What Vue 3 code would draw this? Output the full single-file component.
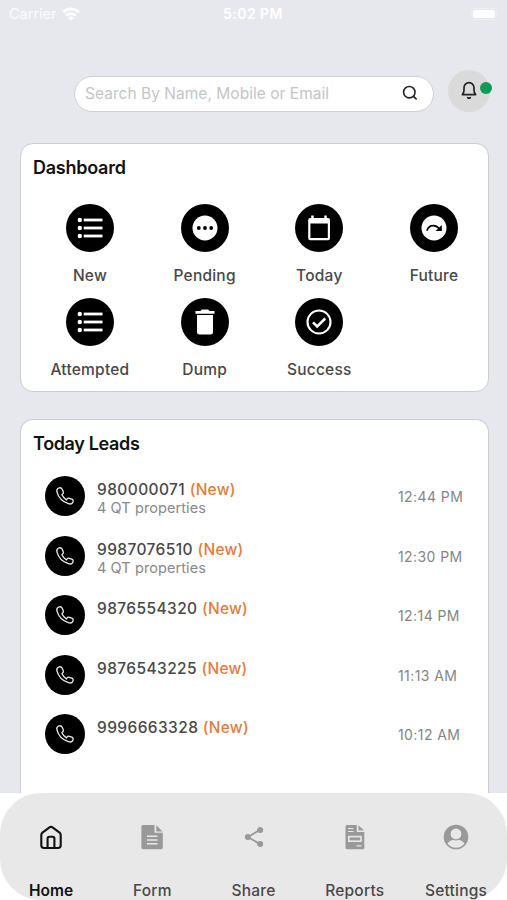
<script setup>
const shortcuts = [
  { label: 'New', icon: 'list' },
  { label: 'Pending', icon: 'pending' },
  { label: 'Today', icon: 'calendar' },
  { label: 'Future', icon: 'future' },
  { label: 'Attempted', icon: 'list' },
  { label: 'Dump', icon: 'trash' },
  { label: 'Success', icon: 'success' },
]

const leads = [
  { phone: '980000071', note: '4 QT properties', time: '12:44 PM' },
  { phone: '9987076510', note: '4 QT properties', time: '12:30 PM' },
  { phone: '9876554320', note: '', time: '12:14 PM' },
  { phone: '9876543225', note: '', time: '11:13 AM' },
  { phone: '9996663328', note: '', time: '10:12 AM' },
]

const tabs = ['Home', 'Form', 'Share', 'Reports', 'Settings']
</script>

<template>
  <div class="screen">
    <div class="status">
      <div class="carrier">
        <span>Carrier</span>
        <svg width="18" height="14" viewBox="0 0 18 14" fill="none" stroke="#fff" stroke-width="2.8">
          <path d="M1 5.200C5.600.7 12.400.7 17 5.200" />
          <path d="M4 8.600C6.800 5.900 11.200 5.900 14 8.600" />
          <path d="M9 13.800 5.900 10.700C7.700 9.200 10.300 9.200 12.100 10.700Z" fill="#fff" stroke="none" />
        </svg>
      </div>
      <span class="clock">5:02 PM</span>
      <div class="battery"><i></i></div>
    </div>

    <header class="header">
      <div class="search">
        <span>Search By Name, Mobile or Email</span>
        <svg width="16" height="16" viewBox="0 0 16 16" fill="none" stroke="#222" stroke-width="1.600" stroke-linecap="round">
          <circle cx="7.300" cy="7.200" r="5.700" />
          <path d="m11.500 11.400 2.600 2.500" />
        </svg>
      </div>
      <div class="bell">
        <svg width="18" height="20" viewBox="0 0 18 20" fill="none" stroke="#222" stroke-width="1.700" stroke-linecap="round" stroke-linejoin="round">
          <path d="M2.400 13.600h13.200c-1.200-1.300-1.600-2.700-1.600-4.300V6.700a5 5 0 0 0-10 0v2.600c0 1.600-.4 3-1.600 4.300Z" />
          <path d="M7.700 16.700q1.300.8 2.600 0" />
        </svg>
        <i class="dot"></i>
      </div>
    </header>

    <section class="card dashboard">
      <h2>Dashboard</h2>
      <div class="grid">
        <div v-for="s in shortcuts" :key="s.label" class="shortcut">
          <div class="disc">
            <svg width="28" height="28" viewBox="0 0 28 28">
              <g v-if="s.icon === 'list'" fill="#fff">
                <template v-for="y in [6, 14, 22]" :key="y">
                  <circle cx="3.800" :cy="y" r="2.200" />
                  <rect x="7.700" :y="y - 1.400" width="18.800" height="2.800" />
                </template>
              </g>
              <g v-else-if="s.icon === 'pending'">
                <circle cx="14" cy="14" r="12.500" fill="#fff" />
                <circle v-for="x in [7.800, 14, 20.200]" :key="x" :cx="x" cy="14" r="1.900" />
              </g>
              <g v-else-if="s.icon === 'calendar'">
                <path fill="#fff" fill-rule="evenodd" d="M6.200 1.600h2.500V4h10.600V1.600h2.500V4h1.200q2 0 2 2v18.200q0 2-2 2H5.200q-2 0-2-2V6q0-2 2-2h1Zm-.8 8v14.400h17.400V9.600Z" />
              </g>
              <g v-else-if="s.icon === 'future'">
                <circle cx="14" cy="14" r="12.500" fill="#fff" />
                <path d="M6.900 16.800C8 13 10.200 11.600 13.200 11.600c2.600 0 4.400 1.100 6.200 3.200" fill="none" stroke="#000" stroke-width="1.700" />
                <path d="M21.800 10.900v6.200h-6.200Z" />
              </g>
              <g v-else-if="s.icon === 'trash'" fill="#fff">
                <path d="M4.500 3h5l1.300-1.500h6.400L18.500 3h5v2.800h-19Z" />
                <path d="M6 7h16v16.900q0 2.500-2.500 2.500h-11Q6 26.400 6 23.900Z" />
              </g>
              <g v-else fill="none" stroke="#fff">
                <circle cx="14" cy="14" r="11.500" stroke-width="2.100" />
                <path d="m8 14.300 4.200 4.200 8-8" stroke-width="2.500" />
              </g>
            </svg>
          </div>
          <span>{{ s.label }}</span>
        </div>
      </div>
    </section>

    <section class="card leads">
      <h2>Today Leads</h2>
      <div v-for="l in leads" :key="l.phone" class="lead">
        <div class="call">
          <svg width="20" height="20" viewBox="0 0 20 20" fill="none" stroke="#eee" stroke-width="1.300" stroke-linejoin="round">
            <path d="M3.700 2C2 2.700 1.500 4.200 2 6.100c1.500 5.400 5.800 9.800 11.400 11.600 1.900.6 3.800.1 4.500-1.500.6-1.400.1-2.500-1.200-3l-2.300-.9c-1.200-.4-2.100-.1-2.600 1l-.3.700C9.800 12.700 8 11 6.900 8.700l.7-.6c.9-.7 1-1.600.6-2.600l-1-2.200C6.600 2 5.200 1.400 3.700 2Z" />
          </svg>
        </div>
        <div class="info">
          <div class="phone">{{ l.phone }} <em>(New)</em></div>
          <div v-if="l.note" class="note">{{ l.note }}</div>
        </div>
        <span class="time">{{ l.time }}</span>
      </div>
    </section>

    <div class="dock">
      <nav class="tabs">
        <div v-for="t in tabs" :key="t" class="tab" :class="{ active: t === 'Home' }">
          <svg width="28" height="28" viewBox="0 0 28 28">
            <g v-if="t === 'Home'" fill="none" stroke="#111" stroke-width="2.100" stroke-linejoin="round">
              <path d="M4.300 12Q4.300 10.500 5.400 9.600L12.500 4.300q1.500-1 3 0l7.100 5.300q1.100.9 1.100 2.400v10.300q0 2.700-2.700 2.700H7q-2.700 0-2.700-2.700Z" />
              <path d="M10.600 24.500v-9q0-1.700 1.700-1.700h3.400q1.700 0 1.700 1.700v9" />
            </g>
            <g v-else-if="t === 'Form'" fill="#999">
              <path d="M5.100 2h11.400v7.700h8.300v14.900q0 1.700-1.700 1.700h-18q-1.700 0-1.700-1.700V3.700Q3.400 2 5.100 2Z" />
              <path d="M18.300 2.300 24.600 8.500h-6.300Z" />
              <path d="M9 13.200h10.500M9 17h10.500M9 20.800h10.500" stroke="#e8e8e8" stroke-width="1.500" />
            </g>
            <g v-else-if="t === 'Share'" fill="#999" stroke="#999">
              <path d="M20.200 6.800 7.800 14l12.400 7.200" fill="none" stroke-width="1.900" />
              <circle cx="20.200" cy="7" r="2.600" />
              <circle cx="7.800" cy="14" r="2.600" />
              <circle cx="20.200" cy="21" r="2.600" />
            </g>
            <g v-else-if="t === 'Reports'" fill="#999">
              <path d="M6 2h9.800v7h7.500v15.800q0 1.500-1.500 1.500H6q-1.500 0-1.500-1.500V3.500Q4.500 2 6 2Z" />
              <path d="M17.500 2.200 23 7.500h-5.500Z" />
              <path d="M7 5.500h5.500M7 8.500h5.500M15.500 22.800h5" stroke="#e8e8e8" stroke-width="1.200" />
              <rect x="7.800" y="13.600" width="12.200" height="4.600" fill="none" stroke="#e8e8e8" stroke-width="1.600" />
            </g>
            <g v-else>
              <circle cx="14" cy="14" r="12.300" fill="#999" />
              <path d="M5.400 20.600c1.800-2.900 5-4 8.600-4s6.800 1.100 8.600 4a11 11 0 0 1-17.200 0Z" fill="#e8e8e8" />
              <circle cx="14" cy="10.900" r="6" fill="#e8e8e8" stroke="#999" stroke-width="1.200" />
            </g>
          </svg>
          <span>{{ t }}</span>
        </div>
      </nav>
    </div>
  </div>
</template>

<style>
body { margin: 0; overflow: hidden; }
</style>

<style scoped>
.screen {
  box-sizing: border-box;
  width: 507px;
  height: 900px;
  overflow: hidden;
  display: flex;
  flex-direction: column;
  background: #e7e8ee;
  font-family: Inter, "Liberation Sans", sans-serif;
  color: #484848;
}
svg { display: block; flex: none; }
.status {
  flex: none;
  height: 27px;
  padding: 0 10px 0 9px;
  display: grid;
  grid-template-columns: 1fr auto 1fr;
  align-items: center;
  color: #fff;
  font-size: 14.500px;
}
.carrier { display: flex; align-items: center; gap: 5px; opacity: .9; }
.clock { font-weight: 600; font-size: 14px; letter-spacing: .45px; }
.battery {
  justify-self: end;
  box-sizing: border-box;
  width: 26px;
  height: 12px;
  padding: 1px;
  border: 1px solid #ededf2;
  border-radius: 4px;
}
.battery i { display: block; height: 8px; border-radius: 2px; background: #fff; }
.header {
  flex: none;
  height: 42px;
  margin: 43px 17px 0 74px;
  display: flex;
  justify-content: space-between;
  align-items: center;
}
.search {
  box-sizing: border-box;
  width: 360px;
  height: 36px;
  margin-top: 5px;
  padding: 0 15px 2px 10px;
  display: flex;
  align-items: center;
  justify-content: space-between;
  background: #fff;
  border: 1px solid #cfcfd3;
  border-radius: 18px;
  color: #c5c5c7;
  font-size: 15.500px;
  letter-spacing: .03px;
}
.search span { padding-top: 2px; }
.bell {
  position: relative;
  width: 42px;
  height: 42px;
  border-radius: 50%;
  background: #dadada;
  display: flex;
  align-items: center;
  justify-content: center;
}
.dot {
  position: absolute;
  right: -2px;
  top: 12px;
  width: 12px;
  height: 12px;
  border-radius: 50%;
  background: #109b58;
}
.card {
  flex: none;
  box-sizing: border-box;
  margin: 0 18px 0 20px;
  background: #fff;
  border: 1px solid #cbccd2;
  border-radius: 13px;
}
h2 {
  margin: 0;
  padding-left: 12px;
  font-size: 18px;
  line-height: 24px;
  font-weight: 600;
  letter-spacing: -.25px;
  color: #111;
}
.dashboard { height: 249px; margin-top: 31px; padding-top: 12px; }
.grid {
  display: grid;
  grid-template-columns: repeat(4, 114.700px);
  grid-auto-rows: 93.700px;
  margin: 24px 0 0 11.600px;
}
.shortcut { display: flex; flex-direction: column; align-items: center; font-size: 15.500px; line-height: 20px; font-weight: 500; letter-spacing: .22px; gap: 14px; }
.disc, .call { display: flex; align-items: center; justify-content: center; flex: none; border-radius: 50%; background: #000; }
.disc { width: 48px; height: 48px; }
.leads { height: 374px; margin-top: 27px; padding-top: 12px; border-bottom: 0; border-radius: 13px 13px 0 0; }
.leads h2 { margin-bottom: 20px; letter-spacing: -.35px; }
.lead {
  height: 59.600px;
  padding-left: 24px;
  display: grid;
  grid-template-columns: 52px 301px auto;
  align-items: start;
}
.call { width: 40px; height: 40px; }
.info { padding-top: 4px; }
.phone { font-size: 15.500px; line-height: 20px; font-weight: 500; letter-spacing: .4px; }
.phone em { font-style: normal; color: #e07d3e; letter-spacing: .2px; }
.note { font-size: 14.500px; line-height: 16px; color: #898989; letter-spacing: .08px; }
.time { font-size: 14px; line-height: 41px; color: #858585; letter-spacing: .42px; }
.dock { flex: none; height: 107px; background: #fff; }
.tabs { box-sizing: border-box; height: 107px; padding-left: .4px; display: grid; grid-template-columns: repeat(5, 101.250px); background: #e8e8e8; border-radius: 41px; }
.tab { display: flex; flex-direction: column; align-items: center; padding-top: 30px; gap: 30px; font-size: 15.500px; line-height: 20px; font-weight: 500; letter-spacing: .22px; }
.active { color: #111; font-weight: 600; letter-spacing: 0; }
</style>
